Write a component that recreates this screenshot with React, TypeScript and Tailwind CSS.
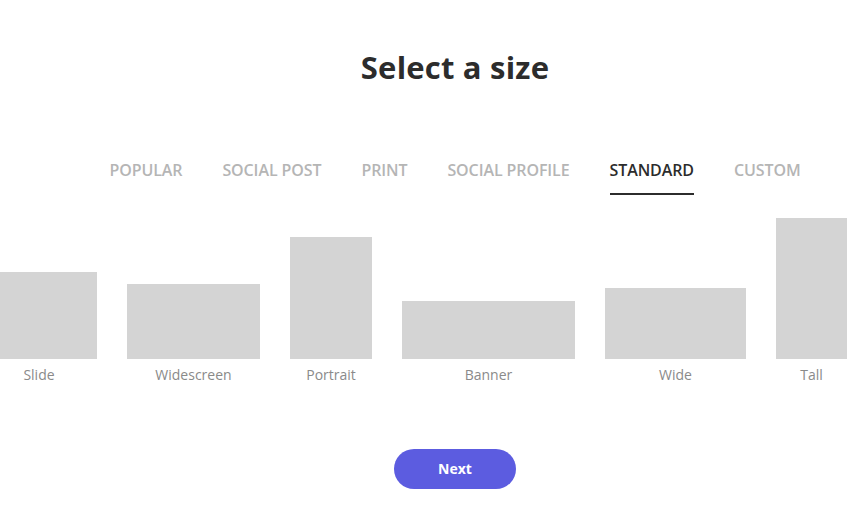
import React, { useState } from 'react';

interface SizeOption {
  name: string;
  w: number;
  h: number;
}

const tabs = ['Popular', 'Social post', 'Print', 'Social profile', 'Standard', 'Custom'];

// tamanhos da aba "standard", em px de pré-visualização
const sizes: SizeOption[] = [
  { name: 'Slide', w: 116, h: 87 },
  { name: 'Widescreen', w: 133, h: 75 },
  { name: 'Portrait', w: 82, h: 122 },
  { name: 'Banner', w: 173, h: 58 },
  { name: 'Wide', w: 141, h: 71 },
  { name: 'Tall', w: 71, h: 141 },
];

export default function App() {
  const [active, setActive] = useState('Standard');

  return (
    <div className="w-[855px] h-[527px] overflow-hidden bg-white font-['Open_Sans',sans-serif]">
      <div className="pl-[55px] flex flex-col items-center">
        <h1 className="mt-[47px] text-[31px] leading-[40px] font-bold text-[#2c2c2c] tracking-[0.2px]">Select a size</h1>

        <div className="mt-[72px] flex gap-[40px]">
          {tabs.map((t) => (
            <button
              key={t}
              onClick={() => setActive(t)}
              className={
                'relative pb-[14px] text-[16px] leading-[22px] uppercase font-semibold tracking-[-0.1px] ' +
                (active === t ? 'text-[#2c2c2c]' : 'text-[#b5b5b5]')
              }
            >
              {t}
              {active === t && <span className="absolute left-0 right-0 bottom-0 h-[2px] bg-[#2c2c2c]" />}
            </button>
          ))}
        </div>
      </div>

      <div className="mt-[23px] -ml-[19px] flex items-end gap-[30px]">
        {sizes.map((s) => (
          <div key={s.name} className="flex flex-col items-center shrink-0">
            <div className="bg-[#d4d4d4]" style={{ width: s.w, height: s.h }} />
            <span className="mt-[6px] text-[14px] leading-[19px] text-[#8a8a8a]">{s.name}</span>
          </div>
        ))}
      </div>

      <div className="pl-[55px] flex justify-center mt-[65px]">
        <button className="w-[122px] h-[40px] rounded-full bg-[#5c5ce0] text-white text-[14px] leading-[38px] font-bold">Next</button>
      </div>
    </div>
  );
}
